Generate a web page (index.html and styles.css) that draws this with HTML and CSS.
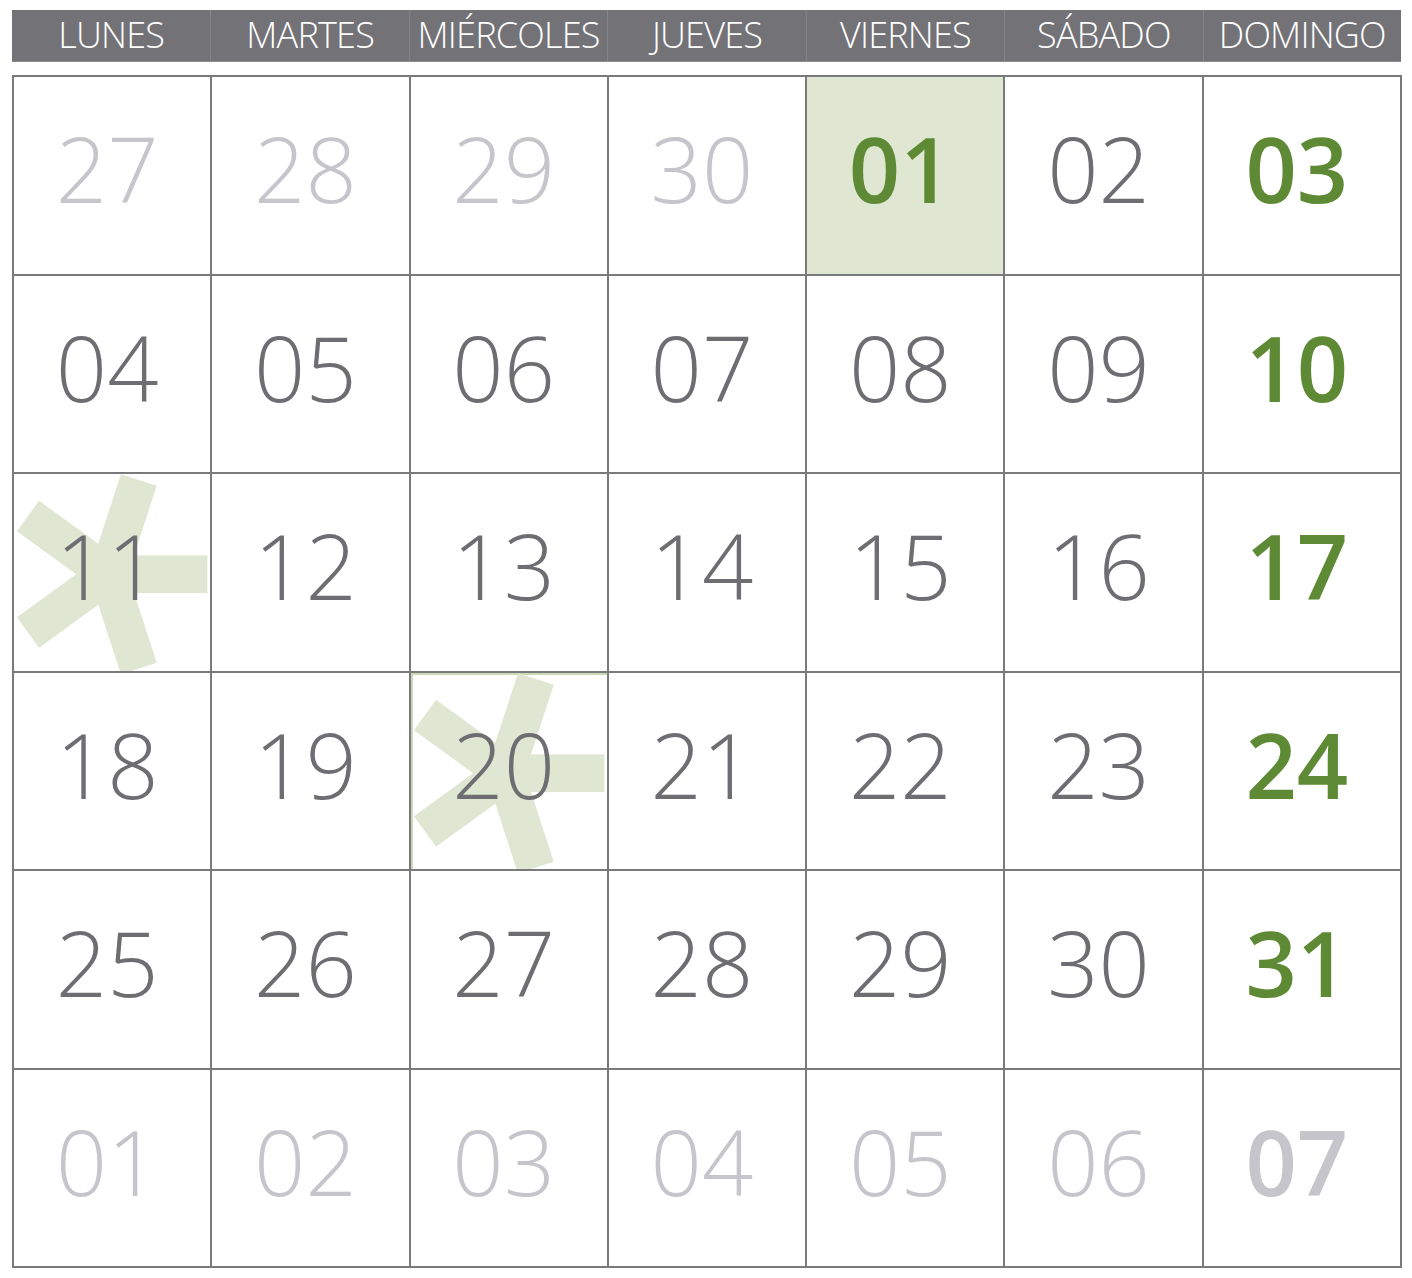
FILE: index.html
```html
<!DOCTYPE html>
<html lang="es">
<head>
<meta charset="utf-8">
<title>Calendario</title>
<link rel="stylesheet" href="styles.css">
</head>
<body>
<div class="calendar">
  <div class="weekdays">
    <div class="wd">LUNES</div>
    <div class="wd">MARTES</div>
    <div class="wd">MIÉRCOLES</div>
    <div class="wd">JUEVES</div>
    <div class="wd">VIERNES</div>
    <div class="wd">SÁBADO</div>
    <div class="wd">DOMINGO</div>
  </div>
  <div class="grid">
    <div class="cell other"><span class="num">27</span></div>
    <div class="cell other"><span class="num">28</span></div>
    <div class="cell other"><span class="num">29</span></div>
    <div class="cell other"><span class="num">30</span></div>
    <div class="cell today"><span class="num">01</span></div>
    <div class="cell"><span class="num">02</span></div>
    <div class="cell sunday"><span class="num">03</span></div>

    <div class="cell"><span class="num">04</span></div>
    <div class="cell"><span class="num">05</span></div>
    <div class="cell"><span class="num">06</span></div>
    <div class="cell"><span class="num">07</span></div>
    <div class="cell"><span class="num">08</span></div>
    <div class="cell"><span class="num">09</span></div>
    <div class="cell sunday"><span class="num">10</span></div>

    <div class="cell mark">
      <svg class="star" viewBox="0 0 198 198" aria-hidden="true"><g transform="translate(95 101)" fill="#dfe7d3"><rect x="-4" y="-19" width="104" height="38"/><rect x="-4" y="-19" width="104" height="38" transform="rotate(72)"/><rect x="-4" y="-19" width="104" height="38" transform="rotate(144)"/><rect x="-4" y="-19" width="104" height="38" transform="rotate(216)"/><rect x="-4" y="-19" width="104" height="38" transform="rotate(288)"/></g></svg>
      <span class="num">11</span></div>
    <div class="cell"><span class="num">12</span></div>
    <div class="cell"><span class="num">13</span></div>
    <div class="cell"><span class="num">14</span></div>
    <div class="cell"><span class="num">15</span></div>
    <div class="cell"><span class="num">16</span></div>
    <div class="cell sunday"><span class="num">17</span></div>

    <div class="cell"><span class="num">18</span></div>
    <div class="cell"><span class="num">19</span></div>
    <div class="cell mark green-edge">
      <svg class="star" viewBox="0 0 198 198" aria-hidden="true"><g transform="translate(95 101)" fill="#dfe7d3"><rect x="-4" y="-19" width="104" height="38"/><rect x="-4" y="-19" width="104" height="38" transform="rotate(72)"/><rect x="-4" y="-19" width="104" height="38" transform="rotate(144)"/><rect x="-4" y="-19" width="104" height="38" transform="rotate(216)"/><rect x="-4" y="-19" width="104" height="38" transform="rotate(288)"/></g></svg>
      <span class="num">20</span></div>
    <div class="cell"><span class="num">21</span></div>
    <div class="cell"><span class="num">22</span></div>
    <div class="cell"><span class="num">23</span></div>
    <div class="cell sunday"><span class="num">24</span></div>

    <div class="cell"><span class="num">25</span></div>
    <div class="cell"><span class="num">26</span></div>
    <div class="cell"><span class="num">27</span></div>
    <div class="cell"><span class="num">28</span></div>
    <div class="cell"><span class="num">29</span></div>
    <div class="cell"><span class="num">30</span></div>
    <div class="cell sunday"><span class="num">31</span></div>

    <div class="cell other"><span class="num">01</span></div>
    <div class="cell other"><span class="num">02</span></div>
    <div class="cell other"><span class="num">03</span></div>
    <div class="cell other"><span class="num">04</span></div>
    <div class="cell other"><span class="num">05</span></div>
    <div class="cell other"><span class="num">06</span></div>
    <div class="cell other sunday-other"><span class="num">07</span></div>
  </div>
</div>
</body>
</html>
```

FILE: styles.css
```css
* { box-sizing: border-box; }

html, body {
  margin: 0;
  padding: 0;
  background: #ffffff;
}

body {
  font-family: "Open Sans", "DejaVu Sans", sans-serif;
}

.calendar {
  width: 1402px;
  padding: 10px 0 0 12px;
}

.weekdays {
  display: grid;
  grid-template-columns: repeat(7, 1fr);
  width: 1389px;
  height: 52px;
  background: #737277;
  border-bottom: 1px solid #8c8b8f;
}

.wd {
  display: flex;
  align-items: center;
  justify-content: center;
  color: #ffffff;
  font-weight: 300;
  font-size: 36px;
  letter-spacing: -0.8px;
  line-height: 1;
  padding-bottom: 2px;
  border-left: 1px solid #858488;
}

.wd:first-child { border-left: none; }

.grid {
  margin-top: 13px;
  display: grid;
  grid-template-columns: repeat(7, 1fr);
  grid-template-rows: repeat(6, 1fr);
  width: 1390px;
  height: 1193px;
  border-top: 2px solid #7a7a7c;
  border-left: 2px solid #7a7a7c;
}

.cell {
  position: relative;
  display: flex;
  align-items: center;
  justify-content: center;
  border-right: 2px solid #7a7a7c;
  border-bottom: 2px solid #7a7a7c;
  padding: 0 10px 14px 0;
  overflow: hidden;
}

.num {
  position: relative;
  z-index: 1;
  font-size: 90px;
  line-height: 1;
  font-weight: 300;
  color: #6d6d72;
}

.other .num { color: #c5c5cb; }

.today { background: #dfe7d3; }

.today .num,
.sunday .num {
  color: #5f8a35;
  font-weight: 600;
}

.sunday-other .num {
  color: #c5c5cb;
  font-weight: 600;
}

.star {
  position: absolute;
  left: 0;
  top: 0;
  width: 100%;
  height: 100%;
}

.green-edge {
  box-shadow: inset 2px 2px 0 #c9d9b6;
}
```
